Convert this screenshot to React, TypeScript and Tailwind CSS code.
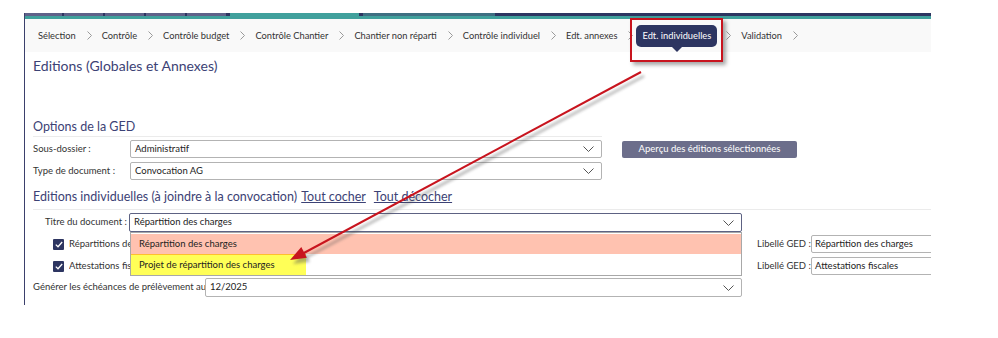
import React from "react";

const crumbs = [
    "Sélection",
    "Contrôle",
    "Contrôle budget",
    "Contrôle Chantier",
    "Chantier non réparti",
    "Contrôle individuel",
    "Edt. annexes",
    "Edt. individuelles",
    "Validation",
];
const activeCrumb = 7;

// top progress band: [width, colour]
const band: [number, string][] = [
    [37, "#5f6189"], [2, "#2d3561"], [39, "#5f6189"], [2, "#2d3561"], [39, "#5f6189"],
    [2, "#2d3561"], [39, "#5f6189"], [2, "#2d3561"], [39, "#5f6189"], [4, "#2d3561"],
    [129, "#40a09c"], [4, "#2d3561"], [132, "#3e6f82"], [436, "#2d3561"],
];

function Chevron({ className = "" }: { className?: string }) {
    return (
        <svg width="5" height="9" viewBox="0 0 5 9" className={className}>
            <path d="M0.5 0.5 L4.5 4.5 L0.5 8.5" fill="none" stroke="#9a9a9a" strokeWidth="1" />
        </svg>
    );
}

function Select({ value, width, focused = false }: { value: string; width: string; focused?: boolean }) {
    return (
        <div
            className={`${width} h-full shrink-0 flex items-center justify-between pl-[4px] pr-[7px] bg-white rounded-[2px] border ${
                focused ? "border-[#5d6283]" : "border-[#b3b3b3]"
            }`}
        >
            <span className="text-[9.5px] text-[#222] whitespace-nowrap">{value}</span>
            <svg width="11" height="6" viewBox="0 0 11 6">
                <path d="M0.5 0.5 L5.5 5.5 L10.5 0.5" fill="none" stroke="#555" strokeWidth="1" />
            </svg>
        </div>
    );
}

function Checkbox() {
    return (
        <div className="w-[11px] h-[11px] rounded-[1px] bg-[#2d3561] flex items-center justify-center shrink-0">
            <svg width="8" height="7" viewBox="0 0 8 7">
                <path d="M0.8 3.6 L3 5.8 L7.2 1" fill="none" stroke="white" strokeWidth="1.3" />
            </svg>
        </div>
    );
}

function LibelleRow({ label, value }: { label: string; value: string }) {
    return (
        <div className="flex items-center h-[18px]">
            <div className="w-[724px] h-full flex items-center pl-[20px] gap-[5px] shrink-0">
                <Checkbox />
                {/* the open dropdown hides the rest of the label */}
                <div className="w-[61px] overflow-hidden whitespace-nowrap text-[9.5px] text-[#333]">{label}</div>
            </div>
            <span className="w-[54px] shrink-0 whitespace-nowrap text-[9.5px] text-[#333]">Libellé GED :</span>
            <div className="w-[130px] shrink-0 h-full flex items-center pl-[3px] border border-[#b3b3b3] rounded-[2px] text-[9.5px] text-[#222] whitespace-nowrap">
                {value}
            </div>
        </div>
    );
}

export default function App() {
    return (
        <div className="relative w-[998px] h-[338px] bg-white overflow-hidden font-['Lato',sans-serif]">
            <div className="ml-[24px] mt-[13px] w-[907px] h-[292px] border-l border-[#3b406c] overflow-hidden">
                <div className="flex h-[3px]">
                    {band.map(([w, c], i) => (
                        <div key={i} className="h-full shrink-0" style={{ width: w, background: c }} />
                    ))}
                </div>
                <div className="h-[3px] bg-[#40a09c]" />

                {/* breadcrumb */}
                <div className="h-[33px] bg-[#f9f9f9] flex items-center pl-[8px] whitespace-nowrap">
                    {crumbs.map((c, i) => (
                        <React.Fragment key={c}>
                            {i === activeCrumb ? (
                                <span className="relative h-[22px] px-[6px] ml-[-2px] mr-[3px] flex items-center rounded-[5px] bg-[#2d3561] text-white text-[9.3px]">
                                    {c}
                                    <span className="absolute left-1/2 -translate-x-1/2 top-full w-0 h-0 border-l-[5px] border-r-[5px] border-t-[5px] border-l-transparent border-r-transparent border-t-[#2d3561]" />
                                </span>
                            ) : (
                                <span className="px-[5px] text-[9.3px] text-[#333]">{c}</span>
                            )}
                            <Chevron className="ml-[6px] mr-[5px]" />
                        </React.Fragment>
                    ))}
                </div>

                <div className="pl-[8px]">
                    <h1 className="mt-[4px] h-[20px] leading-[20px] text-[14px] text-[#3c4275]">
                        Editions (Globales et Annexes)
                    </h1>

                    <h2 className="mt-[43px] h-[16px] leading-[16px] text-[12.5px] text-[#3c4275]">Options de la GED</h2>
                    <div className="mt-[1px] h-px w-[569px] bg-[#ebebeb]" />

                    <div className="mt-[3px] flex items-center h-[18px]">
                        <span className="w-[97px] shrink-0 whitespace-nowrap text-[9.5px] text-[#333]">Sous-dossier :</span>
                        <Select value="Administratif" width="w-[472px]" />
                        <button className="ml-[20px] w-[175px] h-[17px] shrink-0 rounded-[2px] bg-[#6c6e8b] text-white text-[9.5px]">
                            Aperçu des éditions sélectionnées
                        </button>
                    </div>
                    <div className="mt-[4px] flex items-center h-[18px]">
                        <span className="w-[97px] shrink-0 whitespace-nowrap text-[9.5px] text-[#333]">Type de document :</span>
                        <Select value="Convocation AG" width="w-[472px]" />
                    </div>

                    <h2 className="mt-[9px] h-[16px] leading-[16px] text-[12.5px] text-[#3c4275] whitespace-nowrap">
                        Editions individuelles (à joindre à la convocation){" "}
                        <span className="underline ml-[1px]">Tout cocher</span>
                        <span className="underline ml-[8px]">Tout décocher</span>
                    </h2>
                    <div className="mt-[4px] h-px w-full bg-[#ebebeb]" />

                    <div className="relative mt-[3px] flex items-center h-[19px] pl-[12px]">
                        <span className="w-[84px] shrink-0 whitespace-nowrap text-[9.5px] text-[#333]">Titre du document :</span>
                        <Select value="Répartition des charges" width="w-[613px]" focused />

                        {/* open dropdown */}
                        <div className="absolute z-10 left-[97px] top-full w-[612px] h-[44px] bg-white border border-[#a8a8a8] pt-[1px] flex flex-col">
                            <div className="h-[20px] bg-[#ffc2b0] flex items-center pl-[8px] text-[9.5px] text-[#222]">
                                Répartition des charges
                            </div>
                            <div className="h-[21px] w-[175px] bg-[#ffff57] border-t border-[#ffbf2e] flex items-center pl-[8px] text-[9.5px] text-[#222]">
                                Projet de répartition des charges
                            </div>
                        </div>
                    </div>

                    <div className="mt-[3px]">
                        <LibelleRow label="Répartitions des charges" value="Répartition des charges" />
                    </div>
                    <div className="mt-[4px]">
                        <LibelleRow label="Attestations fiscales" value="Attestations fiscales" />
                    </div>

                    <div className="mt-[3px] flex items-center h-[19px]">
                        <span className="w-[172px] shrink-0 whitespace-nowrap text-[9.5px] text-[#333]">
                            Générer les échéances de prélèvement au
                        </span>
                        <Select value="12/2025" width="w-[537px]" />
                    </div>
                </div>
            </div>

            {/* annotation: red frame around the active step */}
            <div className="absolute left-[630px] top-[18px] w-[93px] h-[44px] border-2 border-[#c8141e] shadow-[3px_3px_4px_rgba(0,0,0,0.35)]" />

            {/* annotation: arrow */}
            <svg className="absolute left-0 top-0 z-20 pointer-events-none" width="998" height="338">
                <defs>
                    <filter id="blur" x="-10%" y="-10%" width="120%" height="120%">
                        <feGaussianBlur stdDeviation="1.5" />
                    </filter>
                </defs>
                <g filter="url(#blur)" opacity="0.45" transform="translate(3 4)">
                    <line x1="641" y1="72" x2="302" y2="254" stroke="#555" strokeWidth="2.5" />
                    <polygon points="290,260 306.9,257.7 301.3,247.1" fill="#555" />
                </g>
                <line x1="641" y1="72" x2="302" y2="254" stroke="#c8141e" strokeWidth="2" />
                <polygon points="290,260 306.9,257.7 301.3,247.1" fill="#c8141e" />
            </svg>
        </div>
    );
}
